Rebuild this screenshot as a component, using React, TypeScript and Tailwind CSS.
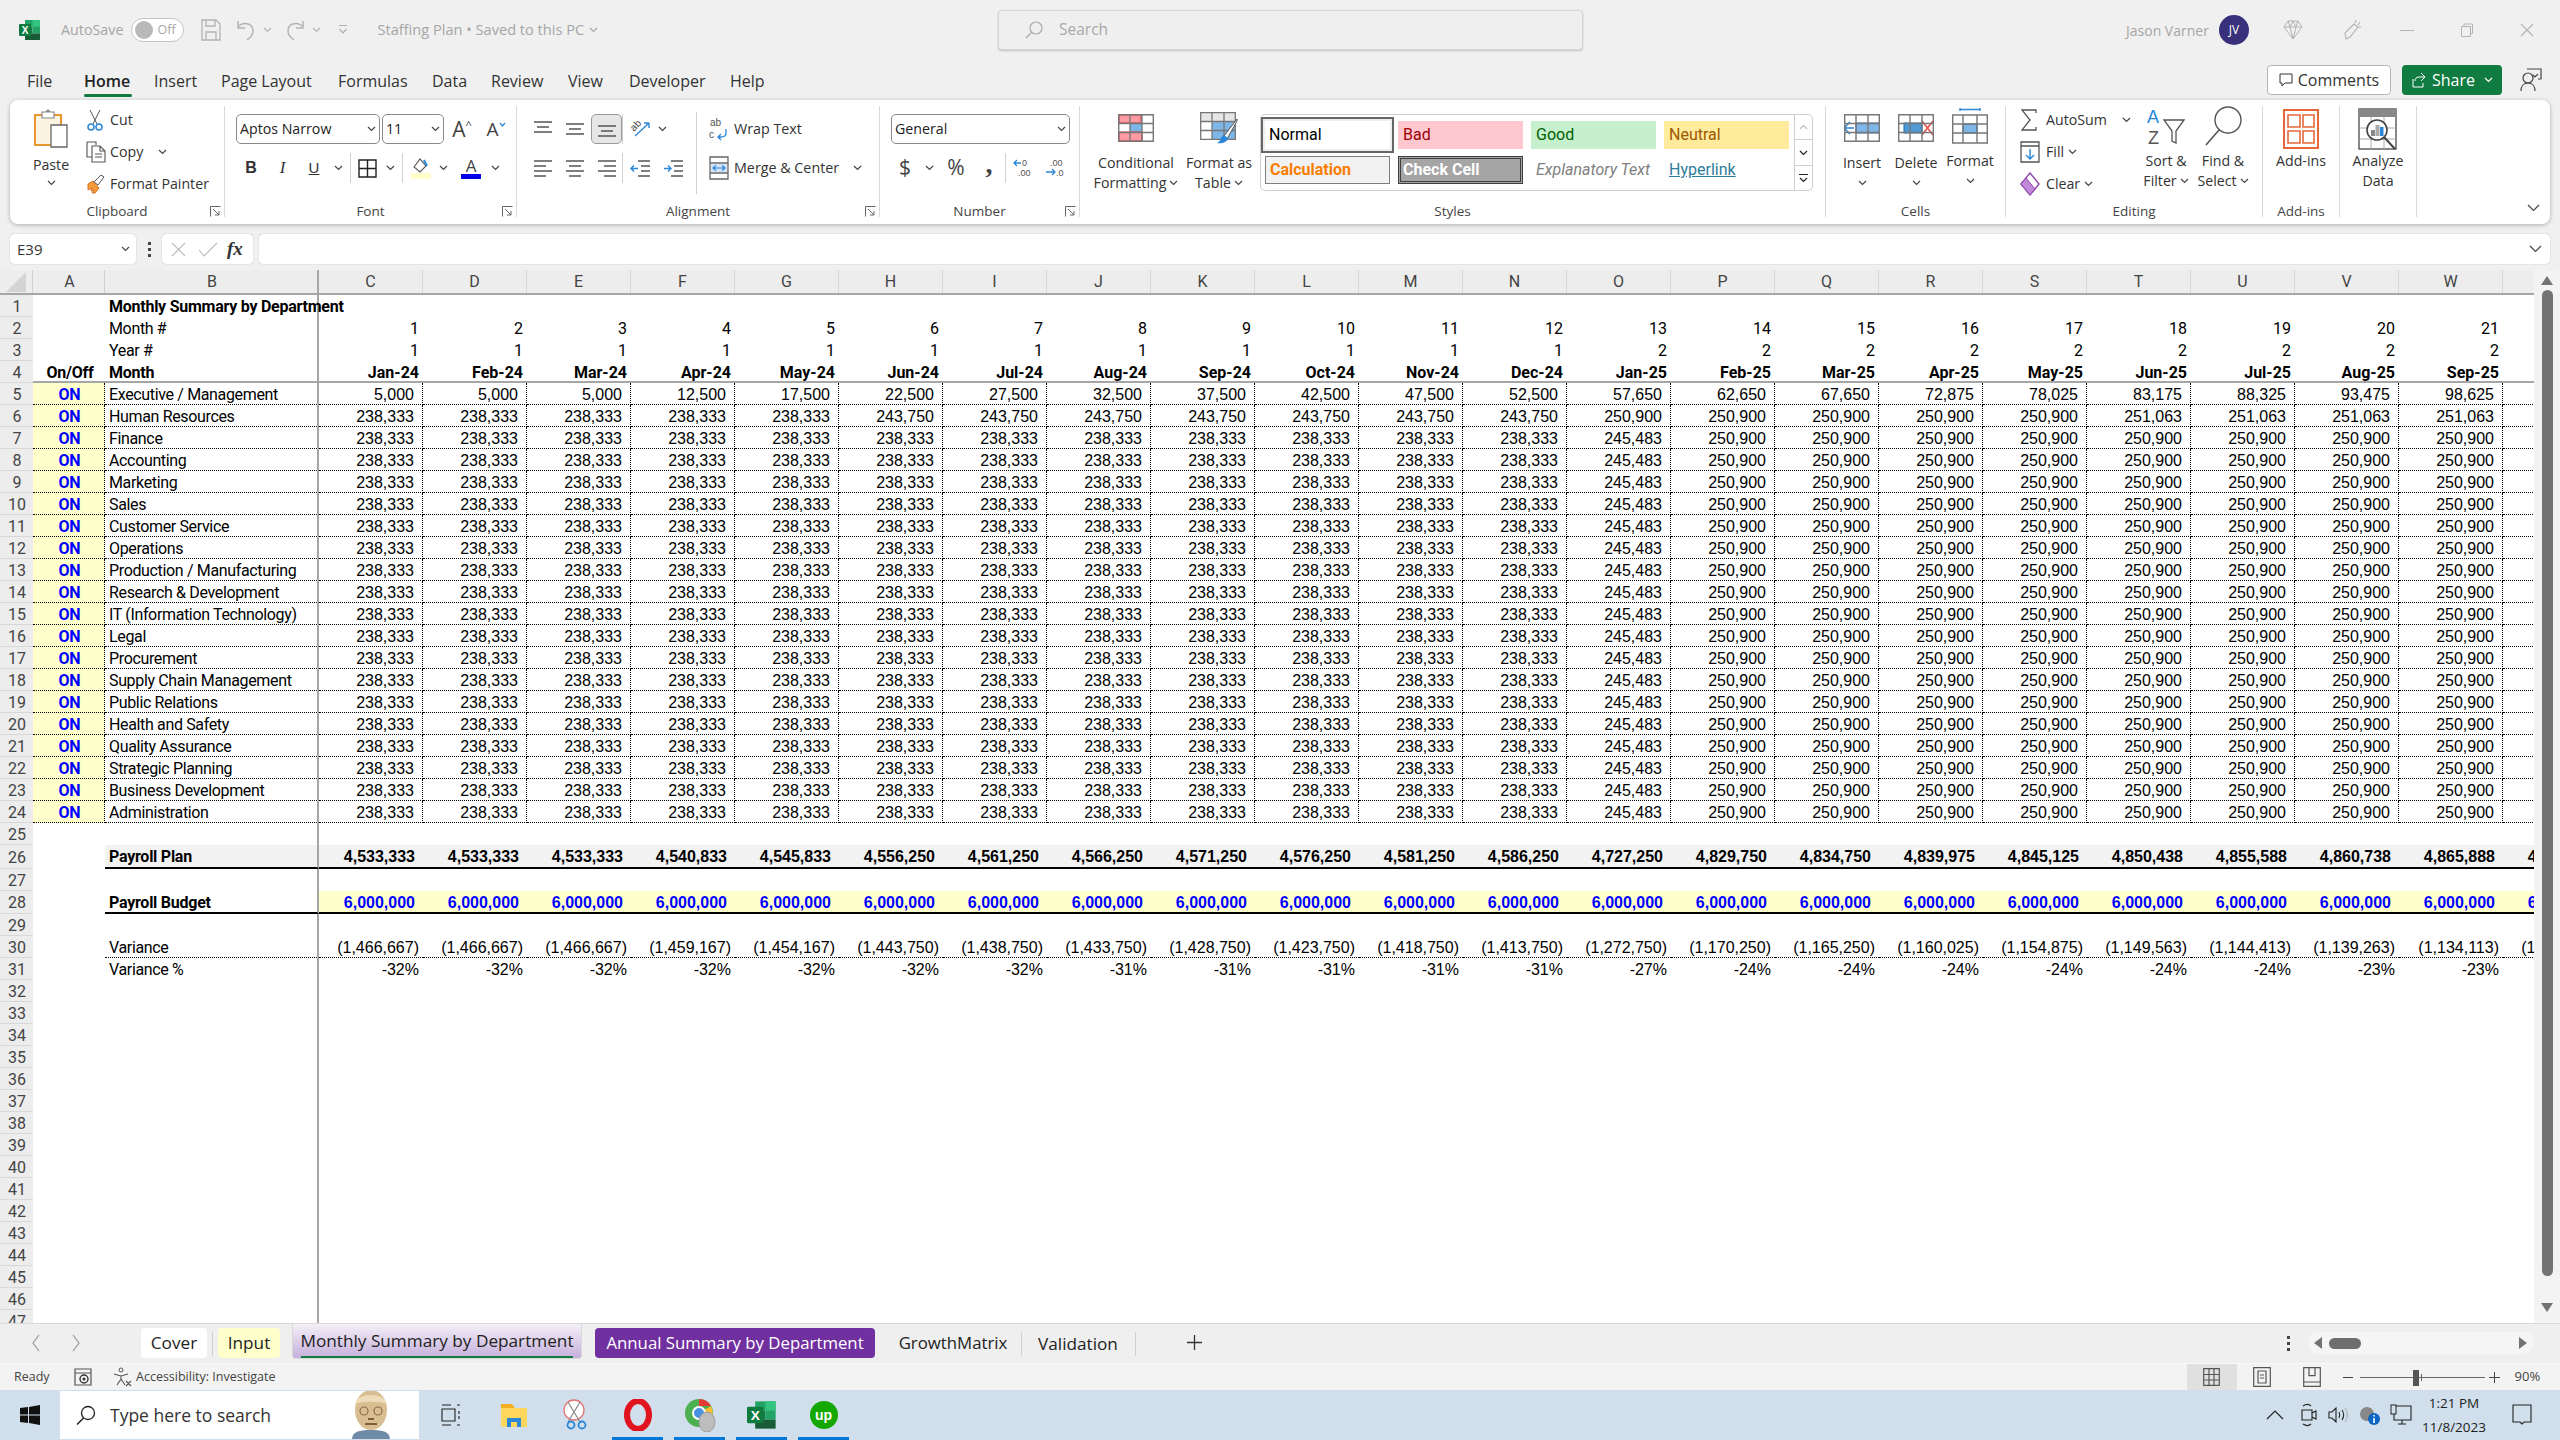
import React from 'react';

const letters = ['C','D','E','F','G','H','I','J','K','L','M','N','O','P','Q','R','S','T','U','V','W','X'];
const dates = ['Jan-24','Feb-24','Mar-24','Apr-24','May-24','Jun-24','Jul-24','Aug-24','Sep-24','Oct-24','Nov-24','Dec-24','Jan-25','Feb-25','Mar-25','Apr-25','May-25','Jun-25','Jul-25','Aug-25','Sep-25'];
const months = dates.map((_, i) => String(i + 1));
const years = dates.map((_, i) => (i < 12 ? '1' : '2'));

const rep = (v: string, n: number) => Array(n).fill(v) as string[];

const execRow = ['5,000','5,000','5,000','12,500','17,500','22,500','27,500','32,500','37,500','42,500','47,500','52,500','57,650','62,650','67,650','72,875','78,025','83,175','88,325','93,475','98,625',''];
const hrRow = [...rep('238,333', 5), ...rep('243,750', 7), ...rep('250,900', 5), ...rep('251,063', 4), ''];
const stdRow = [...rep('238,333', 12), '245,483', ...rep('250,900', 8), ''];
const plan = ['4,533,333','4,533,333','4,533,333','4,540,833','4,545,833','4,556,250','4,561,250','4,566,250','4,571,250','4,576,250','4,581,250','4,586,250','4,727,250','4,829,750','4,834,750','4,839,975','4,845,125','4,850,438','4,855,588','4,860,738','4,865,888','4,871,038'];
const variance = ['(1,466,667)','(1,466,667)','(1,466,667)','(1,459,167)','(1,454,167)','(1,443,750)','(1,438,750)','(1,433,750)','(1,428,750)','(1,423,750)','(1,418,750)','(1,413,750)','(1,272,750)','(1,170,250)','(1,165,250)','(1,160,025)','(1,154,875)','(1,149,563)','(1,144,413)','(1,139,263)','(1,134,113)','(1,128,963)'];
const variancePct = [...rep('-32%', 7), ...rep('-31%', 5), '-27%', ...rep('-24%', 6), ...rep('-23%', 2)];

const departments = ['Executive / Management','Human Resources','Finance','Accounting','Marketing','Sales','Customer Service','Operations','Production / Manufacturing','Research & Development','IT (Information Technology)','Legal','Procurement','Supply Chain Management','Public Relations','Health and Safety','Quality Assurance','Strategic Planning','Business Development','Administration'];

const Chev = ({ c = '#444' }: { c?: string }) => (
  <svg width="9" height="6" viewBox="0 0 9 6" className="shrink-0"><path d="M1 1l3.5 3.5L8 1" fill="none" stroke={c} strokeWidth="1.2" /></svg>
);

const Launcher = () => (
  <svg width="11" height="11" viewBox="0 0 11 11" className="absolute bottom-0 right-[3px]"><path d="M.5 10.5V.5h10M3 3l6 6M9 5v4H5" fill="none" stroke="#666" strokeWidth="1" /></svg>
);

const Group = ({ className, label, launcher, children }: { className: string; label?: string; launcher?: boolean; children: React.ReactNode }) => (
  <div className={`relative flex h-[111px] shrink-0 flex-col border-r border-[#d9d9d9] ${className}`}>
    <div className="flex h-[100px]">{children}</div>
    <div className="flex h-[11px] items-center justify-center text-[13.5px] text-[#444]">{label}</div>
    {launcher && <Launcher />}
  </div>
);

const Select = ({ className, text }: { className: string; text: string }) => (
  <div className={`flex h-[30px] items-center justify-between rounded-[5px] border border-[#8a8a8a] pl-[3px] pr-[3px] text-[14.2px] text-[#222] ${className}`}>
    <span>{text}</span><Chev />
  </div>
);

const BigBtn = ({ className, icon, l1, l2, chevOwn }: { className: string; icon: React.ReactNode; l1: string; l2?: string; chevOwn?: boolean }) => (
  <div className={`flex shrink-0 flex-col items-center text-[14.2px] leading-[20px] text-[#333] ${className}`}>
    <div className="flex h-[40px] items-center justify-center">{icon}</div>
    <div className="mt-[5px] whitespace-nowrap">{l1}</div>
    {l2 ? <div className="flex items-center gap-[3px] whitespace-nowrap">{l2}{chevOwn && <Chev />}</div> : chevOwn && <div className="flex h-[20px] items-center"><Chev /></div>}
  </div>
);

const Grid3 = ({ children }: { children?: React.ReactNode }) => (
  <svg width="36" height="28" viewBox="0 0 36 28">
    {children}
    <path d="M.7.7h34.6v26.6H.7zM12 .7v26.6M24 .7v26.6M.7 9.5h34.6M.7 18.5h34.6" fill="none" stroke="#777" strokeWidth="1.4" />
  </svg>
);

const ExcelLogo = ({ s = 22 }: { s?: number }) => (
  <svg width={s} height={s} viewBox="0 0 22 22">
    <rect x="6" y="1" width="15" height="6.7" fill="#21a366" />
    <rect x="13.5" y="1" width="7.5" height="6.7" fill="#33c481" />
    <rect x="6" y="7.7" width="7.5" height="6.7" fill="#107c41" />
    <rect x="13.5" y="7.7" width="7.5" height="6.7" fill="#21a366" />
    <rect x="6" y="14.4" width="15" height="6.6" fill="#185c37" />
    <rect x="0" y="5" width="12" height="12" rx="1" fill="#0f7b3f" />
    <text x="6" y="14.5" textAnchor="middle" fontSize="10" fontWeight="700" fill="#fff" fontFamily="Liberation Sans, sans-serif">X</text>
  </svg>
);

const TitleBar = () => (
  <div className="flex h-[60px] shrink-0 items-start">
    <div className="flex h-[60px] w-[998px] shrink-0 items-center pl-[19px] text-[#a6a6a6]">
      <ExcelLogo />
      <span className="ml-[20px] text-[14.3px]">AutoSave</span>
      <div className="ml-[8px] flex h-[24px] w-[53px] items-center rounded-full border border-[#c4c4c4] bg-white pl-[3px]">
        <div className="h-[18px] w-[18px] rounded-full bg-[#b9b9b9]" />
        <span className="ml-[4px] text-[12.5px]">Off</span>
      </div>
      <svg width="20" height="22" viewBox="0 0 20 22" className="ml-[17px]"><path d="M1 1h14l4 4v16H1zM5 1v6h9V1M5 21v-8h10v8" fill="none" stroke="#b3b3b3" strokeWidth="1.3" /></svg>
      <svg width="20" height="22" viewBox="0 0 20 22" className="ml-[15px]"><path d="M2 2v7h7M2 8c5-6 15-4 15 4 0 4-3 7-6 9" fill="none" stroke="#b3b3b3" strokeWidth="1.4" /></svg>
      <span className="ml-[7px]"><Chev c="#b3b3b3" /></span>
      <svg width="20" height="22" viewBox="0 0 20 22" className="ml-[13px]"><path d="M18 2v7h-7M18 8C13 2 3 4 3 12c0 4 3 7 6 9" fill="none" stroke="#b3b3b3" strokeWidth="1.4" /></svg>
      <span className="ml-[7px]"><Chev c="#b3b3b3" /></span>
      <svg width="10" height="12" viewBox="0 0 10 12" className="ml-[17px]"><path d="M1 1.5h8M1.5 5l3.5 4 3.5-4" fill="none" stroke="#b3b3b3" strokeWidth="1.2" /></svg>
      <span className="ml-[29px] text-[14.6px]">Staffing Plan • Saved to this PC</span>
      <span className="ml-[5px]"><Chev c="#a6a6a6" /></span>
    </div>
    <div className="mt-[10px] flex h-[40px] w-[585px] shrink-0 items-center rounded-[4px] border border-[#d6d6d6] bg-[#efefef] pl-[26px] shadow-[0_1px_2px_rgba(0,0,0,0.2)]">
      <svg width="18" height="18" viewBox="0 0 18 18"><circle cx="11" cy="7" r="6" fill="none" stroke="#ababab" strokeWidth="1.2" /><path d="M6.5 11.5L1 17" stroke="#ababab" strokeWidth="1.3" /></svg>
      <span className="ml-[16px] text-[15.5px] text-[#a9a9a9]">Search</span>
    </div>
    <div className="flex h-[60px] flex-1 items-center text-[#a6a6a6]">
      <span className="ml-[543px] whitespace-nowrap text-[14px]">Jason Varner</span>
      <div className="ml-[10px] flex h-[30px] w-[30px] shrink-0 items-center justify-center rounded-full bg-[#39307b] text-[12px] text-white">JV</div>
      <svg width="20" height="20" viewBox="0 0 20 20" className="ml-[34px] shrink-0"><path d="M5 1h10l4 6-9 12L1 7zM1 7h18M7 7l3 12 3-12M5 1l2 6 3-6 3 6 2-6" fill="none" stroke="#b3b3b3" strokeWidth="1" /></svg>
      <svg width="20" height="22" viewBox="0 0 20 22" className="ml-[39px] shrink-0"><path d="M3 14L12 5l4 3-8 10-4 2zM14 1l-1 3M18 3l-2 3M19 8h-3" fill="none" stroke="#b3b3b3" strokeWidth="1.1" /></svg>
      <div className="ml-[38px] h-[1px] w-[14px] shrink-0 bg-[#b3b3b3]" />
      <svg width="14" height="14" viewBox="0 0 14 14" className="ml-[46px] shrink-0"><path d="M1.5 3.5h9v10h-9zM4 3.5V1h8.5v9.5h-2" fill="none" stroke="#b3b3b3" strokeWidth="1" /></svg>
      <svg width="14" height="14" viewBox="0 0 14 14" className="ml-[46px] shrink-0"><path d="M1 1l12 12M13 1L1 13" stroke="#b3b3b3" strokeWidth="1.1" /></svg>
    </div>
  </div>
);

const TabsRow = () => (
  <div className="flex h-[40px] shrink-0 items-center pl-[27px] pt-[1px] text-[16px] text-[#333]">
    <span className="w-[57px]">File</span>
    <div className="relative w-[70px]">
      <span className="font-semibold text-[#222]">Home</span>
      <div className="absolute -bottom-[4px] left-0 h-[3px] w-[48px] rounded-full bg-[#107c41]" />
    </div>
    <span className="w-[67px]">Insert</span>
    <span className="w-[117px]">Page Layout</span>
    <span className="w-[94px]">Formulas</span>
    <span className="w-[59px]">Data</span>
    <span className="w-[77px]">Review</span>
    <span className="w-[61px]">View</span>
    <span className="w-[101px]">Developer</span>
    <span className="w-[60px]">Help</span>
    <div className="-mt-[1px] ml-[1477px] flex h-[30px] w-[124px] items-center justify-center gap-[5px] rounded-[4px] border border-[#b5b5b5] bg-white text-[#333]">
      <svg width="14" height="15" viewBox="0 0 14 15"><path d="M1 1h12v9H6l-3 3v-3H1z" fill="none" stroke="#333" strokeWidth="1" /></svg>
      Comments
    </div>
    <div className="-mt-[1px] ml-[11px] flex h-[30px] w-[100px] items-center rounded-[4px] bg-[#107c41] pl-[10px] text-white">
      <svg width="14" height="16" viewBox="0 0 14 16"><path d="M9 1l4 4-4 4M13 5H7C4 5 3 7 3 9M1 7v8h10v-4" fill="none" stroke="#fff" strokeWidth="1" /></svg>
      <span className="ml-[6px]">Share</span>
      <span className="ml-[9px]"><Chev c="#fff" /></span>
    </div>
    <svg width="22" height="24" viewBox="0 0 22 24" className="-mt-[1px] ml-[18px]"><circle cx="8" cy="10" r="5" fill="none" stroke="#444" strokeWidth="1.2" /><path d="M1 23c0-5 3-8 7-8s7 3 7 8M7 1h14v10h-3" fill="none" stroke="#444" strokeWidth="1.2" /><path d="M13 7l2 2 3-3" fill="none" stroke="#444" strokeWidth="1.2" /></svg>
  </div>
);

const Clipboard = () => (
  <Group className="w-[215px]" label="Clipboard" launcher>
    <div className="ml-[14px] mt-[3px] flex w-[54px] flex-col items-center text-[14.2px] text-[#333]">
      <svg width="36" height="40" viewBox="0 0 36 40">
        <path d="M2 6h26v30H2z" fill="#fdf3e3" stroke="#e8962f" strokeWidth="2" />
        <path d="M9 3h12v6H9z" fill="#fff" stroke="#888" strokeWidth="1.2" />
        <path d="M15 0l3 3h-6z" fill="#888" />
        <path d="M18 16h16v22H18z" fill="#fff" stroke="#666" strokeWidth="1.3" />
      </svg>
      <span className="mt-[5px]">Paste</span>
      <span className="mt-[5px]"><Chev /></span>
    </div>
    <div className="ml-[8px] mt-[-2px] flex flex-col text-[14.2px] text-[#333]">
      <div className="flex h-[32px] items-center">
        <svg width="18" height="22" viewBox="0 0 18 22" className="mr-[6px]"><path d="M4 1l7 14M14 1L7 15" stroke="#555" strokeWidth="1" /><circle cx="5" cy="18" r="3" fill="none" stroke="#2b88d8" strokeWidth="1.5" /><circle cx="13" cy="18" r="3" fill="none" stroke="#2b88d8" strokeWidth="1.5" /></svg>
        Cut
      </div>
      <div className="flex h-[32px] items-center">
        <svg width="20" height="22" viewBox="0 0 20 22" className="mr-[4px]"><path d="M1 1h9v3M1 1v15h5" fill="none" stroke="#555" strokeWidth="1.1" /><path d="M6 5h8l5 5v11H6zM14 5v5h5M9 13h7M9 16h7" fill="#fff" stroke="#555" strokeWidth="1.1" /></svg>
        Copy
        <span className="ml-[15px]"><Chev /></span>
      </div>
      <div className="flex h-[32px] items-center">
        <svg width="20" height="22" viewBox="0 0 20 22" className="mr-[4px]"><path d="M2 11l5-3 6 7-4 5H6l2-3-3 1 1-3-4 2z" fill="#f59a38" stroke="#d9722a" strokeWidth="1" /><path d="M8 9l7-7 3 2-6 8z" fill="#fff" stroke="#555" strokeWidth="1" /></svg>
        Format Painter
      </div>
    </div>
  </Group>
);

const FontGroup = () => (
  <Group className="w-[292px]" label="Font" launcher>
    <div className="ml-[11px] mt-[8px] flex flex-col">
      <div className="flex h-[30px] items-center">
        <Select className="w-[144px]" text="Aptos Narrow" />
        <Select className="ml-[2px] w-[62px]" text="11" />
        <div className="flex w-[36px] justify-center text-[21px] leading-none text-[#444]">A<span className="text-[11px]">^</span></div>
        <div className="flex w-[32px] justify-center text-[19px] leading-none text-[#444]">A<svg width="7" height="6" viewBox="0 0 7 6" className="mt-[2px]"><path d="M1 1l2.5 3L6 1" fill="none" stroke="#2b88d8" strokeWidth="1.2" /></svg></div>
      </div>
      <div className="mt-[9px] flex h-[30px] items-center text-[#333]">
        <div className="flex w-[30px] justify-center font-['Liberation_Sans',sans-serif] text-[16px] font-bold">B</div>
        <div className="flex w-[33px] justify-center font-['Liberation_Serif',serif] text-[17px] italic">I</div>
        <div className="flex w-[30px] justify-center font-['Liberation_Sans',sans-serif] text-[15px] underline">U</div>
        <div className="flex w-[18px] justify-center"><Chev /></div>
        <div className="mx-[3px] h-[30px] w-[1px] bg-[#d0d0d0]" />
        <div className="flex w-[26px] justify-center"><svg width="19" height="19" viewBox="0 0 19 19"><path d="M1 1h17v17H1zM9.5 1v17M1 9.5h17" fill="none" stroke="#222" strokeWidth="1.4" /></svg></div>
        <div className="flex w-[20px] justify-center"><Chev /></div>
        <div className="mx-[2px] h-[30px] w-[1px] bg-[#d0d0d0]" />
        <div className="flex w-[31px] justify-center"><svg width="20" height="22" viewBox="0 0 20 22"><path d="M3 10l6-8 6 7-6 6z" fill="#fff" stroke="#555" strokeWidth="1.1" /><path d="M13 3l3 6" stroke="#2b88d8" strokeWidth="2" /><rect y="16" width="20" height="6" fill="#ffffcc" /></svg></div>
        <div className="flex w-[14px] justify-center"><Chev /></div>
        <div className="ml-[8px] flex w-[26px] flex-col items-center"><span className="text-[17px] leading-[17px] text-[#444]">A</span><div className="h-[5px] w-[20px] bg-[#0000e6]" /></div>
        <div className="ml-[4px] flex w-[14px] justify-center"><Chev /></div>
      </div>
    </div>
  </Group>
);

const Sep = () => <div className="h-[30px] w-[1px] shrink-0 bg-[#d0d0d0]" />;

const Alignment = () => (
  <Group className="w-[363px]" label="Alignment" launcher>
    <div className="ml-[10px] mt-[8px] flex w-[169px] flex-col">
      <div className="flex h-[30px] items-center">
        <div className="flex w-[32px] justify-center"><svg width="18" height="16" viewBox="0 0 18 16"><path d="M0 1h18M3 6h12M0 11h18" stroke="#555" strokeWidth="1.5" /></svg></div>
        <div className="flex w-[32px] justify-center"><svg width="18" height="16" viewBox="0 0 18 16"><path d="M0 3h18M3 8h12M0 13h18" stroke="#555" strokeWidth="1.5" /></svg></div>
        <div className="flex h-[30px] w-[31px] items-center justify-center rounded-[5px] border border-[#9a9a9a] bg-[#e6e6e6]"><svg width="18" height="16" viewBox="0 0 18 16"><path d="M0 5h18M3 10h12M0 15h18" stroke="#555" strokeWidth="1.5" /></svg></div>
        <Sep />
        <div className="flex w-[34px] justify-center"><svg width="22" height="22" viewBox="0 0 22 22"><path d="M6 18L20 5M20 5h-5M20 5v5" fill="none" stroke="#2b88d8" strokeWidth="1.4" /><text x="1" y="12" fontSize="10" fill="#444" transform="rotate(-45 5 8)" fontFamily="Liberation Sans, sans-serif">ab</text></svg></div>
        <div className="flex w-[10px] justify-center"><Chev /></div>
      </div>
      <div className="mt-[9px] flex h-[30px] items-center">
        <div className="flex w-[32px] justify-center"><svg width="18" height="18" viewBox="0 0 18 18"><path d="M0 2h18M0 7h12M0 12h18M0 17h12" stroke="#555" strokeWidth="1.5" /></svg></div>
        <div className="flex w-[32px] justify-center"><svg width="18" height="18" viewBox="0 0 18 18"><path d="M0 2h18M3 7h12M0 12h18M3 17h12" stroke="#555" strokeWidth="1.5" /></svg></div>
        <div className="flex w-[31px] justify-center"><svg width="18" height="18" viewBox="0 0 18 18"><path d="M0 2h18M6 7h12M0 12h18M6 17h12" stroke="#555" strokeWidth="1.5" /></svg></div>
        <Sep />
        <div className="flex w-[34px] justify-center"><svg width="20" height="18" viewBox="0 0 20 18"><path d="M8 2h12M11 7h9M11 12h9M8 17h12" stroke="#555" strokeWidth="1.5" /><path d="M8 9.5H1M4 6.5l-3 3 3 3" fill="none" stroke="#2b88d8" strokeWidth="1.4" /></svg></div>
        <div className="flex w-[32px] justify-center"><svg width="20" height="18" viewBox="0 0 20 18"><path d="M8 2h12M11 7h9M11 12h9M8 17h12" stroke="#555" strokeWidth="1.5" /><path d="M1 9.5h7M5 6.5l3 3-3 3" fill="none" stroke="#2b88d8" strokeWidth="1.4" /></svg></div>
      </div>
    </div>
    <div className="my-[6px] h-[82px] w-[1px] bg-[#d0d0d0]" />
    <div className="ml-[12px] mt-[8px] flex flex-col text-[14.3px] text-[#333]">
      <div className="flex h-[30px] items-center">
        <svg width="20" height="24" viewBox="0 0 20 24" className="mr-[5px]"><text x="1" y="9" fontSize="10" fill="#555" fontFamily="Liberation Sans, sans-serif">ab</text><text x="0" y="21" fontSize="10" fill="#555" fontFamily="Liberation Sans, sans-serif">c</text><path d="M17 12v4c0 3-2 4-5 4h-3M12 17l-3 3 3 3" fill="none" stroke="#2b88d8" strokeWidth="1.3" /></svg>
        Wrap Text
      </div>
      <div className="mt-[9px] flex h-[30px] items-center">
        <svg width="20" height="24" viewBox="0 0 20 24" className="mr-[5px]"><path d="M1 1h18v22H1zM1 7h18M1 17h18" fill="#fff" stroke="#666" strokeWidth="1.3" /><rect x="2" y="8" width="16" height="8" fill="#cfe4f7" /><path d="M4 12h12M7 9.5L4 12l3 2.5M13 9.5l3 2.5-3 2.5" fill="none" stroke="#2b88d8" strokeWidth="1.2" /></svg>
        Merge &amp; Center
        <span className="ml-[14px]"><Chev /></span>
      </div>
    </div>
  </Group>
);

const NumberGroup = () => (
  <Group className="w-[200px]" label="Number" launcher>
    <div className="ml-[11px] mt-[8px] flex flex-col">
      <Select className="w-[179px]" text="General" />
      <div className="mt-[9px] flex h-[30px] items-center text-[#444]">
        <div className="flex w-[28px] justify-center text-[21px]">$</div>
        <div className="flex w-[20px] justify-center"><Chev /></div>
        <div className="flex w-[34px] justify-center text-[21px]">%</div>
        <div className="-mt-[8px] flex w-[32px] justify-center font-['Liberation_Serif',serif] text-[28px] font-bold leading-[20px]">,</div>
        <Sep />
        <div className="flex w-[33px] justify-center"><svg width="20" height="20" viewBox="0 0 20 20"><text x="9" y="8" fontSize="9" fill="#555" fontFamily="Liberation Sans, sans-serif">0</text><text x="5" y="18" fontSize="9" fill="#555" fontFamily="Liberation Sans, sans-serif">.00</text><path d="M8 5H1M4 2L1 5l3 3" fill="none" stroke="#2b88d8" strokeWidth="1.3" /></svg></div>
        <div className="flex w-[32px] justify-center"><svg width="20" height="20" viewBox="0 0 20 20"><text x="5" y="8" fontSize="9" fill="#555" fontFamily="Liberation Sans, sans-serif">.00</text><text x="11" y="18" fontSize="9" fill="#555" fontFamily="Liberation Sans, sans-serif">.0</text><path d="M1 14h9M7 11l3 3-3 3" fill="none" stroke="#2b88d8" strokeWidth="1.3" /></svg></div>
      </div>
    </div>
  </Group>
);

const Styles = () => (
  <Group className="w-[746px]" label="Styles">
    <BigBtn className="ml-[16px] w-[80px] pt-[2px]" l1="Conditional" l2="Formatting" chevOwn icon={
      <Grid3>
        <rect x="1" y="1" width="22" height="8" fill="#ff9aa2" stroke="#d13438" />
        <rect x="12" y="9" width="12" height="9" fill="#7db7e8" />
        <rect x="1" y="18" width="23" height="9" fill="#ff9aa2" stroke="#d13438" />
      </Grid3>
    } />
    <BigBtn className="ml-[3px] w-[80px] pt-[2px]" l1="Format as" l2="Table" chevOwn icon={
      <svg width="38" height="32" viewBox="0 0 38 32">
        <path d="M.7.7h34.6v26.6H.7z" fill="#fff" />
        <rect x="1" y="1" width="34" height="8" fill="#e6e6e6" />
        <rect x="12" y="10" width="24" height="17" fill="#7db7e8" />
        <path d="M.7.7h34.6v26.6H.7zM12 .7v26.6M24 .7v26.6M.7 9.5h34.6M.7 18.5h34.6" fill="none" stroke="#777" strokeWidth="1.3" />
        <path d="M37 7L24 24l3 3 10-18z" fill="#fff" stroke="#555" />
        <path d="M24 23c-4 1-2 6-7 8 5 1 11-1 11-5z" fill="#2b88d8" />
      </svg>
    } />
    <div className="ml-[1px] mt-[8px] flex h-[77px] w-[553px] rounded-[5px] border border-[#cfcfcf] font-['Roboto',sans-serif] text-[16px]">
      <div className="flex w-[533px] flex-col">
        <div className="flex h-[38px] items-start pt-[2px]">
          <div className="flex h-[36px] w-[133px] items-center border-2 border-[#666] pl-[6px] text-black outline outline-[2px] -outline-offset-[4px] outline-[#eee]">Normal</div>
          <div className="ml-[4px] mt-[4px] flex h-[28px] w-[125px] items-center bg-[#ffc7ce] pl-[5px] text-[#9c0006]">Bad</div>
          <div className="ml-[8px] mt-[4px] flex h-[28px] w-[125px] items-center bg-[#c6efce] pl-[5px] text-[#006100]">Good</div>
          <div className="ml-[8px] mt-[4px] flex h-[28px] w-[125px] items-center bg-[#ffeb9c] pl-[5px] text-[#9c5700]">Neutral</div>
        </div>
        <div className="mt-[3px] flex h-[28px] items-start pl-[4px]">
          <div className="flex h-[28px] w-[125px] items-center border border-[#7f7f7f] bg-[#f2f2f2] pl-[4px] font-bold text-[#fa7d00]">Calculation</div>
          <div className="ml-[8px] flex h-[28px] w-[125px] items-center border-[3px] border-double border-[#3f3f3f] bg-[#a5a5a5] pl-[2px] font-bold text-white">Check Cell</div>
          <div className="ml-[8px] flex h-[28px] w-[125px] items-center whitespace-nowrap pl-[5px] italic text-[#7f7f7f]">Explanatory Text</div>
          <div className="ml-[8px] flex h-[28px] w-[125px] items-center pl-[5px] text-[#2e7d9a] underline">Hyperlink</div>
        </div>
      </div>
      <div className="flex w-[18px] flex-col border-l border-[#cfcfcf]">
        <div className="flex h-[25px] items-center justify-center border-b border-[#cfcfcf]"><svg width="9" height="6" viewBox="0 0 9 6"><path d="M1 5l3.5-3.5L8 5" fill="none" stroke="#bbb" strokeWidth="1.2" /></svg></div>
        <div className="flex h-[26px] items-center justify-center border-b border-[#cfcfcf]"><Chev c="#222" /></div>
        <div className="flex h-[24px] flex-col items-center justify-center gap-[2px]"><div className="h-[1px] w-[9px] bg-[#222]" /><Chev c="#222" /></div>
      </div>
    </div>
  </Group>
);

const Cells = () => (
  <Group className="w-[180px]" label="Cells">
    <BigBtn className="ml-[9px] w-[54px] pt-[2px]" l1="Insert" chevOwn icon={
      <Grid3>
        <rect x="12" y="9" width="24" height="10" fill="#7db7e8" stroke="#1f6fb5" />
        <path d="M10 14H0M6 8l-6 6 6 6" fill="#fff" stroke="#2b88d8" strokeWidth="1.5" />
      </Grid3>
    } />
    <BigBtn className="w-[54px] pt-[2px]" l1="Delete" chevOwn icon={
      <Grid3>
        <rect x="6" y="9" width="18" height="10" fill="#4f9ad8" stroke="#1f6fb5" />
        <path d="M24 7l11 14M35 7L24 21" stroke="#e8483f" strokeWidth="1.5" />
      </Grid3>
    } />
    <BigBtn className="w-[54px]" l1="Format" chevOwn icon={
      <svg width="36" height="36" viewBox="0 0 36 36">
        <path d="M8 1.5h20M8 0v3M28 0v3" stroke="#2b88d8" strokeWidth="1.4" />
        <rect x="11" y="16" width="14" height="9" fill="#7db7e8" stroke="#1f6fb5" />
        <path d="M.7 7h34.6v28H.7zM11 7v28M25 7v28M.7 16h34.6M.7 25h34.6" fill="none" stroke="#777" strokeWidth="1.4" />
      </svg>
    } />
  </Group>
);

const Editing = () => (
  <Group className="w-[257px]" label="Editing">
    <div className="ml-[14px] mt-[-2px] flex w-[118px] flex-col text-[14.2px] text-[#333]">
      <div className="flex h-[32px] items-center">
        <svg width="18" height="22" viewBox="0 0 18 22" className="mr-[8px] shrink-0"><path d="M16 4V1H2l8 10-8 10h14v-3" fill="none" stroke="#555" strokeWidth="1.3" /></svg>
        AutoSum
        <span className="ml-[15px]"><Chev /></span>
      </div>
      <div className="flex h-[32px] items-center">
        <svg width="20" height="22" viewBox="0 0 20 22" className="mr-[6px] shrink-0"><path d="M1 1h18v20H1zM1 5h18" fill="#fff" stroke="#555" strokeWidth="1.3" /><path d="M10 8v10M6 14l4 4 4-4" fill="none" stroke="#2b88d8" strokeWidth="1.4" /></svg>
        Fill
        <span className="ml-[4px]"><Chev /></span>
      </div>
      <div className="flex h-[32px] items-center">
        <svg width="20" height="24" viewBox="0 0 20 24" className="mr-[6px] shrink-0"><path d="M10 1l9 11-9 11L1 12z" fill="#fff" stroke="#8e44ad" strokeWidth="1.4" /><path d="M1 12l9 11 5-6-9-11z" fill="#c08ad8" stroke="#8e44ad" /></svg>
        Clear
        <span className="ml-[4px]"><Chev /></span>
      </div>
    </div>
    <BigBtn className="w-[56px]" l1="Sort &" l2="Filter" chevOwn icon={
      <svg width="38" height="46" viewBox="0 0 38 46">
        <text x="0" y="20" fontSize="18" fill="#2b88d8" fontFamily="Liberation Sans, sans-serif">A</text>
        <text x="1" y="41" fontSize="18" fill="#555" fontFamily="Liberation Sans, sans-serif">Z</text>
        <path d="M17 17h20l-8 11v12l-4-2V28z" fill="#fff" stroke="#555" strokeWidth="1.3" />
      </svg>
    } />
    <BigBtn className="w-[58px]" l1="Find &" l2="Select" chevOwn icon={
      <svg width="38" height="40" viewBox="0 0 38 40">
        <circle cx="24" cy="14" r="13" fill="#fff" stroke="#555" strokeWidth="1.4" />
        <path d="M15 24L2 39" stroke="#555" strokeWidth="1.6" />
      </svg>
    } />
  </Group>
);

const AddIns = () => (
  <Group className="w-[77px]" label="Add-ins">
    <BigBtn className="w-[76px]" l1="Add-ins" icon={
      <svg width="36" height="40" viewBox="0 0 36 40" className="mt-[6px]">
        <path d="M1 1h34v38H1z" fill="#fff" stroke="#e8673a" strokeWidth="2" />
        <path d="M5 6h12v12H5zM20 6h11v12H20zM5 22h12v12H5zM20 22h11v12H20z" fill="none" stroke="#e8673a" strokeWidth="1.6" />
      </svg>
    } />
  </Group>
);

const Analyze = () => (
  <Group className="w-[77px]">
    <BigBtn className="w-[76px]" l1="Analyze" l2="Data" icon={
      <svg width="40" height="42" viewBox="0 0 40 42" className="mt-[6px]">
        <rect x="1" y="1" width="37" height="40" fill="#fff" stroke="#555" strokeWidth="1.4" />
        <rect x="1" y="1" width="37" height="8" fill="#888" />
        <path d="M1 20h37M1 31h37M13 9v32M26 9v32" stroke="#aaa" />
        <circle cx="19" cy="22" r="10" fill="#fff" stroke="#444" strokeWidth="1.6" />
        <rect x="13" y="22" width="4" height="6" fill="#888" /><rect x="17.5" y="17" width="4" height="11" fill="#aaa" /><rect x="22" y="19" width="3.5" height="9" fill="#2b88d8" />
        <path d="M26 29l11 12" stroke="#444" strokeWidth="2" />
      </svg>
    } />
  </Group>
);

const Ribbon = () => (
  <div className="mx-[10px] flex h-[124px] w-[2540px] shrink-0 items-start rounded-[8px] bg-white pt-[6px] shadow-[0_1px_4px_rgba(0,0,0,0.28)]">
    <Clipboard />
    <FontGroup />
    <Alignment />
    <NumberGroup />
    <Styles />
    <Cells />
    <Editing />
    <AddIns />
    <Analyze />
    <div className="ml-[110px] mt-[98px] shrink-0"><svg width="13" height="8" viewBox="0 0 13 8"><path d="M1 1l5.500 5.500L12 1" fill="none" stroke="#444" strokeWidth="1.2" /></svg></div>
  </div>
);

const FormulaBar = () => (
  <div className="mt-[10px] flex h-[30px] shrink-0 items-center pl-[10px]">
    <div className="flex h-[30px] w-[126px] items-center justify-between rounded-[4px] bg-white pl-[7px] pr-[6px] text-[15px] text-[#333] shadow-[0_0_1px_rgba(0,0,0,0.4)]">
      E39<Chev />
    </div>
    <div className="flex w-[26px] flex-col items-center gap-[3px]">
      <div className="h-[3px] w-[3px] bg-[#444]" /><div className="h-[3px] w-[3px] bg-[#444]" /><div className="h-[3px] w-[3px] bg-[#444]" />
    </div>
    <div className="flex h-[30px] w-[91px] items-center rounded-[4px] bg-white pl-[9px] shadow-[0_0_1px_rgba(0,0,0,0.4)]">
      <svg width="15" height="15" viewBox="0 0 15 15"><path d="M1 1l13 13M14 1L1 14" stroke="#bbb" strokeWidth="1.1" /></svg>
      <svg width="20" height="15" viewBox="0 0 20 15" className="ml-[12px]"><path d="M1 8l5 6L19 1" fill="none" stroke="#bbb" strokeWidth="1.1" /></svg>
      <span className="ml-[9px] font-['Liberation_Serif',serif] text-[19px] font-bold italic text-[#333]">fx</span>
    </div>
    <div className="ml-[6px] flex h-[30px] w-[2291px] items-center justify-end rounded-[4px] bg-white pr-[8px] shadow-[0_0_1px_rgba(0,0,0,0.4)]">
      <svg width="13" height="8" viewBox="0 0 13 8"><path d="M1 1l5.500 5.500L12 1" fill="none" stroke="#444" strokeWidth="1.2" /></svg>
    </div>
  </div>
);

const RowNum = ({ n }: { n: number }) => (
  <div className="flex h-full w-[33px] shrink-0 items-center justify-center border-b border-[#d8d8d8] bg-[#ededed] pl-[1px] pt-[2px] font-['Roboto',sans-serif] text-[16px] text-[#444]">{n}</div>
);

type RowKind = 'head' | 'data' | 'plan' | 'budget' | 'var' | 'pct' | 'blank';

const SheetRow = ({ n, a, b, values, kind, boldLabel }: { n: number; a?: string; b?: string; values?: string[]; kind: RowKind; boldLabel?: boolean }) => {
  const dotted = kind === 'data';
  const thick = kind === 'plan' || kind === 'budget';
  const valueCls =
    kind === 'head' ? `pr-[4px] font-['Roboto',sans-serif] ${boldLabel ? 'font-bold' : ''}` :
    kind === 'data' ? "pr-[8px] font-['Liberation_Sans',sans-serif]" :
    kind === 'plan' ? "pr-[8px] font-['Liberation_Sans',sans-serif] font-bold" :
    kind === 'budget' ? "pr-[8px] font-['Liberation_Sans',sans-serif] font-bold text-[#0000ff]" :
    "pr-[4px] font-['Liberation_Sans',sans-serif]";
  const rowH = kind === 'plan' ? 'h-[24px]' : kind === 'budget' ? 'h-[23px]' : 'h-[22px]';
  return (
    <div className={`flex shrink-0 text-[16px] text-black ${rowH}`}>
      <RowNum n={n} />
      <div className={`flex w-[72px] shrink-0 items-center justify-center pl-[2px] pt-[2px] font-['Roboto',sans-serif] tracking-[-0.2px] ${dotted ? 'border-b border-r border-dotted border-black bg-[#ffffcc] font-bold text-[#0000ff]' : ''} ${n === 4 ? 'font-bold' : ''}`}>{a}</div>
      <div className={`flex w-[214px] shrink-0 items-center whitespace-nowrap border-r-2 border-r-[#a6a6a6] pl-[4px] pt-[2px] font-['Roboto',sans-serif] ${boldLabel ? 'font-bold tracking-[-0.25px]' : 'tracking-[-0.35px]'}
        ${dotted || kind === 'var' ? 'border-b border-b-black [border-bottom-style:dotted]' : ''}
        ${thick ? 'border-b-2 border-b-black' : ''} ${kind === 'plan' ? 'bg-[#f2f2f2]' : ''}`}>{b}</div>
      {letters.map((l, i) => (
        <div
          key={l}
          className={`flex h-full w-[104px] shrink-0 items-center justify-end whitespace-nowrap pt-[2px] ${valueCls}
            ${dotted && i < 21 ? 'border-r border-r-black [border-right-style:dotted]' : ''}
            ${dotted || kind === 'var' ? 'border-b border-b-black [border-bottom-style:dotted]' : ''}
            ${thick ? 'border-b-2 border-b-black' : ''} ${kind === 'plan' ? 'bg-[#f2f2f2]' : ''} ${kind === 'budget' ? 'bg-[#ffffcc]' : ''}`}
        >
          {values?.[i]}
        </div>
      ))}
    </div>
  );
};

const Sheet = () => {
  const rows = [];
  for (let n = 32; n <= 47; n++) rows.push(<SheetRow key={n} n={n} kind="blank" />);
  return (
    <div className="relative mt-[6px] flex h-[1053px] shrink-0 overflow-hidden">
      <div className="w-[2534px] shrink-0 overflow-hidden bg-white">
        <div className="flex h-[25px] w-[2800px] border-b-2 border-[#a6a6a6] bg-[#ededed] font-['Roboto',sans-serif] text-[16px] text-[#444]">
          <div className="flex w-[33px] shrink-0 items-center justify-center border-r border-[#d0d0d0]">
            <svg width="20" height="20" viewBox="0 0 20 20"><path d="M20 0v20H0z" fill="#d4d4d4" /></svg>
          </div>
          <div className="flex w-[72px] shrink-0 items-center justify-center border-r border-[#d0d0d0] pl-[2px]">A</div>
          <div className="flex w-[214px] shrink-0 items-center justify-center border-r-2 border-[#a6a6a6] pl-[2px]">B</div>
          {letters.slice(0, 21).map(l => (
            <div key={l} className="flex w-[104px] shrink-0 items-center justify-center border-r border-[#d8d8d8]">{l}</div>
          ))}
        </div>
        <div className="w-[2800px]">
          <SheetRow n={1} b="Monthly Summary by Department" kind="head" boldLabel />
          <SheetRow n={2} b="Month #" values={months} kind="head" />
          <SheetRow n={3} b="Year #" values={years} kind="head" />
          <div className="h-[22px] border-b-2 border-[#a6a6a6]">
            <div className="mb-[-2px]"><SheetRow n={4} a="On/Off" b="Month" values={dates} kind="head" boldLabel /></div>
          </div>
          {departments.map((d, i) => (
            <SheetRow key={d} n={i + 5} a="ON" b={d} values={i === 0 ? execRow : i === 1 ? hrRow : stdRow} kind="data" />
          ))}
          <SheetRow n={25} kind="blank" />
          <SheetRow n={26} b="Payroll Plan" values={plan} kind="plan" boldLabel />
          <SheetRow n={27} kind="blank" />
          <SheetRow n={28} b="Payroll Budget" values={rep('6,000,000', 22)} kind="budget" boldLabel />
          <SheetRow n={29} kind="blank" />
          <SheetRow n={30} b="Variance" values={variance} kind="var" />
          <SheetRow n={31} b="Variance %" values={variancePct} kind="pct" />
          {rows}
        </div>
      </div>
      <div className="flex w-[26px] flex-col items-center bg-[#f3f3f3] pt-[6px]">
        <svg width="12" height="9" viewBox="0 0 12 9"><path d="M6 0l6 9H0z" fill="#737373" /></svg>
        <div className="mt-[5px] h-[986px] w-[11px] rounded-full bg-[#737373]" />
        <svg width="12" height="9" viewBox="0 0 12 9" className="mt-[27px]"><path d="M0 0h12L6 9z" fill="#737373" /></svg>
      </div>
    </div>
  );
};

const SheetTabs = () => (
  <div className="flex h-[40px] shrink-0 items-start border-t border-[#d9d9d9] bg-[#efefef] text-[17.2px] text-[#222]">
    <svg width="10" height="18" viewBox="0 0 10 18" className="ml-[31px] mt-[10px]"><path d="M8 1L2 9l6 8" fill="none" stroke="#999" strokeWidth="1.2" /></svg>
    <svg width="10" height="18" viewBox="0 0 10 18" className="ml-[30px] mt-[10px]"><path d="M2 1l6 8-6 8" fill="none" stroke="#999" strokeWidth="1.2" /></svg>
    <div className="ml-[60px] mt-[4px] flex h-[30px] w-[66px] items-center justify-center rounded-[4px] bg-white">Cover</div>
    <div className="ml-[5px] mt-[8px] h-[24px] w-[1px] bg-[#cfcfcf]" />
    <div className="ml-[5px] mt-[4px] flex h-[30px] w-[62px] items-center justify-center rounded-[4px] bg-[#ffffcc]">Input</div>
    <div className="ml-[12px] flex h-[35px] w-[290px] flex-col items-center rounded-b-[4px] border border-t-0 border-[#d9d9d9] bg-gradient-to-b from-[#f4f0f8] to-[#c5afdb] pt-[4px] text-[#222]">
      <span>Monthly Summary by Department</span>
      <div className="mt-[2px] h-[2px] w-[272px] bg-[#107c41]" />
    </div>
    <div className="ml-[13px] mt-[4px] flex h-[30px] w-[280px] items-center justify-center rounded-[4px] bg-[#7030a0] text-[16.8px] text-white">Annual Summary by Department</div>
    <div className="ml-[22px] mt-[4px] flex h-[30px] w-[112px] items-center justify-center rounded-[4px] text-[16.8px]">GrowthMatrix</div>
    <div className="ml-[12px] mt-[8px] h-[24px] w-[1px] bg-[#cfcfcf]" />
    <span className="ml-[16px] mt-[7px] w-[80px]">Validation</span>
    <div className="ml-[17px] mt-[8px] h-[24px] w-[1px] bg-[#cfcfcf]" />
    <svg width="15" height="15" viewBox="0 0 15 15" className="ml-[51px] mt-[11px]"><path d="M7.500 0v15M0 7.500h15" stroke="#333" strokeWidth="1.3" /></svg>
    <div className="ml-[1085px] mt-[12px] flex flex-col gap-[3px]">
      <div className="h-[3px] w-[3px] bg-[#444]" /><div className="h-[3px] w-[3px] bg-[#444]" /><div className="h-[3px] w-[3px] bg-[#444]" />
    </div>
    <div className="ml-[18px] mt-[8px] flex h-[22px] w-[226px] items-center rounded-full bg-[#f5f5f5] pl-[6px]">
      <svg width="8" height="12" viewBox="0 0 8 12"><path d="M8 0v12L0 6z" fill="#737373" /></svg>
      <div className="ml-[7px] h-[11px] w-[32px] rounded-full bg-[#6e6e6e]" />
      <svg width="8" height="12" viewBox="0 0 8 12" className="ml-[158px]"><path d="M0 0v12l8-6z" fill="#737373" /></svg>
    </div>
  </div>
);

const StatusBar = () => (
  <div className="flex h-[27px] shrink-0 items-center border-t border-[#fafafa] bg-[#f3f3f3] pl-[14px] text-[12.5px] text-[#444]">
    <span className="w-[60px]">Ready</span>
    <svg width="18" height="18" viewBox="0 0 18 18"><path d="M1 1h16v16H1zM1 5h16" fill="none" stroke="#555" strokeWidth="1.2" /><circle cx="10" cy="11" r="4" fill="none" stroke="#333" strokeWidth="1.4" /><circle cx="10" cy="11" r="1.500" fill="#333" /></svg>
    <svg width="20" height="20" viewBox="0 0 20 20" className="ml-[20px]"><circle cx="9" cy="3" r="2" fill="none" stroke="#555" /><path d="M2 7l7 2 7-2M9 9v3l-4 6M9 12l4 6M14 14l5 5M19 14l-5 5" fill="none" stroke="#555" strokeWidth="1.1" /></svg>
    <span className="ml-[4px]">Accessibility: Investigate</span>
    <div className="ml-[1911px] flex h-[26px] w-[50px] items-center justify-center bg-[#e0e0e0]">
      <svg width="17" height="18" viewBox="0 0 17 18"><path d="M.7.7h15.600v16.600H.7zM6 .7v16.600M11 .7v16.600M.7 6.500h15.600M.7 12h15.600" fill="none" stroke="#555" strokeWidth="1.2" /></svg>
    </div>
    <svg width="18" height="20" viewBox="0 0 18 20" className="ml-[16px]"><path d="M.7.7h16.600v18.600H.7zM5 4h8v12H5zM7 8h4M7 11h4" fill="none" stroke="#555" strokeWidth="1.2" /></svg>
    <svg width="18" height="20" viewBox="0 0 18 20" className="ml-[32px]"><path d="M.7.7h16.600v18.600H.7zM6 .7v8h6v-8M.7 15h16.600" fill="none" stroke="#555" strokeWidth="1.2" /></svg>
    <div className="ml-[22px] h-[1px] w-[10px] bg-[#444]" />
    <div className="relative ml-[7px] h-[1px] w-[125px] bg-[#666]">
      <div className="absolute -top-[7px] left-[53px] h-[16px] w-[6px] bg-[#555]" />
      <div className="absolute -top-[3px] left-[61px] h-[7px] w-[1px] bg-[#666]" />
    </div>
    <svg width="11" height="11" viewBox="0 0 11 11" className="ml-[4px]"><path d="M5.500 0v11M0 5.500h11" stroke="#444" strokeWidth="1" /></svg>
    <span className="ml-[15px] text-[13px]">90%</span>
  </div>
);

const Olmec = () => (
  <svg width="54" height="50" viewBox="0 0 54 50" className="shrink-0">
    <path d="M8 50c0-8 6-10 19-10s19 2 19 10z" fill="#6f8ba8" />
    <ellipse cx="27" cy="20" rx="16" ry="20" fill="#d9be92" />
    <path d="M11 14C14 2 40 2 43 14c-8-3-24-3-32 0z" fill="#eedcb9" />
    <circle cx="20" cy="21" r="4" fill="none" stroke="#8b6f47" strokeWidth="1.2" />
    <circle cx="34" cy="21" r="4" fill="none" stroke="#8b6f47" strokeWidth="1.2" />
    <path d="M24 29h6M21 34h12" stroke="#7a5f3c" strokeWidth="1.8" />
  </svg>
);

const Taskbar = () => (
  <div className="flex h-[50px] shrink-0 items-center bg-[#d0dfeb] text-[#222]">
    <svg width="20" height="20" viewBox="0 0 20 20" className="ml-[20px] shrink-0"><path d="M0 3l8-1v7.500H0zM9 2l11-2v9.500H9zM0 10.500h8V18l-8-1zM9 10.500h11V20L9 18z" fill="#111" /></svg>
    <div className="ml-[20px] flex h-[48px] w-[359px] shrink-0 items-center overflow-hidden bg-white pl-[16px]">
      <svg width="20" height="20" viewBox="0 0 20 20" className="shrink-0"><circle cx="12" cy="8" r="6.500" fill="none" stroke="#222" strokeWidth="1.3" /><path d="M7.500 13L1 19.500" stroke="#222" strokeWidth="1.5" /></svg>
      <span className="ml-[14px] w-[234px] shrink-0 text-[17.5px] text-[#333]">Type here to search</span>
      <Olmec />
    </div>
    <svg width="20" height="22" viewBox="0 0 20 22" className="ml-[22px] shrink-0"><path d="M1 1h9M1 21h9M1 5h13v12H1z M16 1h3M16 21h3M18 7v3M18 12v3" fill="none" stroke="#222" strokeWidth="1.1" /></svg>
    <div className="relative ml-[28px] flex h-[50px] w-[50px] shrink-0 items-center justify-center">
      <svg width="28" height="28" viewBox="0 0 28 28"><path d="M1 3h11l3 4H1z" fill="#f2b01e" /><path d="M1 7h26v19H1z" fill="#ffd65c" /><path d="M7 26V17h14v9h-4v-5h-6v5z" fill="#2b88d8" /></svg>
    </div>
    <div className="ml-[12px] flex h-[50px] w-[50px] shrink-0 items-center justify-center">
      <svg width="28" height="32" viewBox="0 0 28 32"><circle cx="12" cy="11" r="10" fill="#fff" stroke="#e57373" strokeWidth="1.3" /><path d="M6 3l12 20M18 3L6 23" stroke="#888" strokeWidth="1.2" /><circle cx="9" cy="26" r="3.500" fill="none" stroke="#2b88d8" strokeWidth="1.8" /><circle cx="20" cy="26" r="3.500" fill="none" stroke="#2b88d8" strokeWidth="1.8" /></svg>
    </div>
    <div className="relative ml-[11px] flex h-[50px] w-[51px] shrink-0 items-center justify-center">
      <svg width="28" height="32" viewBox="0 0 28 32"><ellipse cx="14" cy="16" rx="11" ry="14" fill="none" stroke="#e0131f" strokeWidth="6" /></svg>
      <div className="absolute bottom-0 h-[3px] w-[51px] bg-[#0078d7]" />
    </div>
    <div className="relative ml-[11px] flex h-[50px] w-[51px] shrink-0 items-center justify-center">
      <svg width="32" height="34" viewBox="0 0 32 34"><circle cx="15" cy="15" r="14" fill="#4caf50" /><path d="M15 1a14 14 0 0 1 12 7H15z" fill="#e53935" /><path d="M27 8a14 14 0 0 1-6 19l-6-12z" fill="#fbc02d" /><circle cx="15" cy="15" r="6" fill="#4a90e2" stroke="#fff" strokeWidth="2" /><ellipse cx="23" cy="24" rx="8" ry="10" fill="#bdbdbd" stroke="#9e9e9e" /></svg>
      <div className="absolute bottom-0 h-[3px] w-[51px] bg-[#0078d7]" />
    </div>
    <div className="relative ml-[11px] flex h-[50px] w-[51px] shrink-0 items-center justify-center">
      <ExcelLogo s={30} />
      <div className="absolute bottom-0 h-[3px] w-[51px] bg-[#0078d7]" />
    </div>
    <div className="relative ml-[11px] flex h-[50px] w-[51px] shrink-0 items-center justify-center">
      <div className="flex h-[28px] w-[28px] items-center justify-center rounded-full bg-[#14a800] font-['Liberation_Sans',sans-serif] text-[14px] font-bold leading-none text-white">up</div>
      <div className="absolute bottom-0 h-[3px] w-[51px] bg-[#0078d7]" />
    </div>
    <svg width="18" height="10" viewBox="0 0 18 10" className="ml-[1417px] shrink-0"><path d="M1 9l8-8 8 8" fill="none" stroke="#222" strokeWidth="1.2" /></svg>
    <svg width="16" height="24" viewBox="0 0 16 24" className="ml-[17px] shrink-0"><path d="M1 7h10v10H1zM11 10l4-2v8l-4-2M2 3c3-2 6-2 8 0M2 21c3 2 6 2 8 0" fill="none" stroke="#222" strokeWidth="1.1" /></svg>
    <svg width="20" height="20" viewBox="0 0 20 20" className="ml-[11px] shrink-0"><path d="M1 7h3l4-4v14l-4-4H1zM11 7c1 2 1 4 0 6M14 5c2 3 2 7 0 10" fill="none" stroke="#222" strokeWidth="1.1" /><path d="M17 3c3 4 3 10 0 14" fill="none" stroke="#aaa" /></svg>
    <svg width="22" height="22" viewBox="0 0 22 22" className="ml-[11px] shrink-0"><circle cx="8" cy="10" r="7" fill="#888" /><circle cx="15" cy="15" r="6" fill="#0a66c2" /><path d="M15 14v5M15 11v1.500" stroke="#fff" strokeWidth="1.6" /></svg>
    <svg width="22" height="22" viewBox="0 0 22 22" className="ml-[9px] shrink-0"><path d="M4 2h17v14H4zM12 16v4M8 20h8" fill="none" stroke="#222" strokeWidth="1.1" /><rect x="1" y="1" width="5" height="9" fill="#d0dfeb" stroke="#222" /></svg>
    <div className="ml-[6px] flex w-[72px] shrink-0 flex-col items-center text-[13.5px] leading-[24px] text-[#222]">
      <span>1:21 PM</span><span>11/8/2023</span>
    </div>
    <svg width="20" height="22" viewBox="0 0 20 22" className="ml-[22px] shrink-0"><path d="M1 1h18v17h-7l-2 2-2-2H1z" fill="none" stroke="#222" strokeWidth="1.1" /></svg>
  </div>
);

export default function App() {
  return (
    <div className="flex h-[1440px] w-[2560px] flex-col overflow-hidden bg-[#f0f0f0] font-['Open_Sans',sans-serif]">
      <TitleBar />
      <TabsRow />
      <Ribbon />
      <FormulaBar />
      <Sheet />
      <SheetTabs />
      <StatusBar />
      <Taskbar />
    </div>
  );
}
